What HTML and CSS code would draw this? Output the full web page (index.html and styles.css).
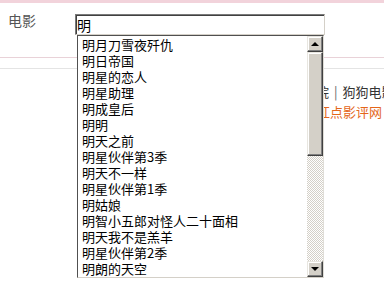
FILE: index.html
```html
<!DOCTYPE html>
<html lang="zh-CN">
<head>
  <meta charset="UTF-8" />
  <title>电影搜索</title>
  <link rel="stylesheet" href="styles.css">
</head>
<body>
  <div class="page">
    <div class="header">
      <div class="search-row">
        <span class="label">电影</span>
        <div class="box">
          <input class="query" type="text" value="明">
          <div class="suggest">
            <ul class="list">
              <li>明月刀雪夜歼仇</li>
              <li>明日帝国</li>
              <li>明星的恋人</li>
              <li>明星助理</li>
              <li>明成皇后</li>
              <li>明明</li>
              <li>明天之前</li>
              <li>明星伙伴第3季</li>
              <li>明天不一样</li>
              <li>明星伙伴第1季</li>
              <li>明姑娘</li>
              <li>明智小五郎对怪人二十面相</li>
              <li>明天我不是羔羊</li>
              <li>明星伙伴第2季</li>
              <li>明朗的天空</li>
            </ul>
            <div class="scrollbar">
              <div class="btn up"><span class="arrow"></span></div>
              <div class="thumb"></div>
              <div class="track"></div>
              <div class="btn down"><span class="arrow"></span></div>
            </div>
          </div>
        </div>
      </div>
    </div>
    <div class="subnav">
      <div class="links first">热门影院<span class="sep">|</span>狗狗电影</div>
      <div class="links second">红点影评网</div>
    </div>
  </div>
</body>
</html>
```

FILE: styles.css
```css
* {
  box-sizing: border-box;
  font-family: "Noto Sans CJK SC", "Liberation Sans", sans-serif;
}
body {
  margin: 0;
  background: #fff;
}
.page {
  height: 297px;
  overflow: hidden;
}
.header {
  border-top: 3px solid #f2d3db;
  border-bottom: 1px solid #e9d2d8;
  height: 58px;
}
.search-row {
  display: flex;
  padding: 10px 0 0 8px;
}
.label {
  width: 67px;
  font-size: 14px;
  line-height: 14px;
  color: #555;
}
.box {
  position: relative;
  z-index: 2;
  width: 250px;
  margin-top: 1px;
}
.query {
  display: block;
  width: 250px;
  height: 21px;
  margin: 0;
  padding: 0 0 0 1px;
  font-size: 14px;
  color: #000;
  border: 1px solid;
  border-color: #7a7a7a #d4d0c8 #d4d0c8 #7a7a7a;
  box-shadow: inset 1px 1px 0 #404040;
  outline: none;
}
.suggest {
  position: absolute;
  left: 2px;
  top: 21px;
  width: 247px;
  height: 243px;
  display: flex;
  background: #fff;
  border: 1px solid;
  border-color: #505050 #e0ded8 #d4d0c8 #505050;
}
.list {
  flex: 1;
  list-style: none;
  margin: 0;
  padding: 1px 0 0 4px;
  overflow: hidden;
}
.list li {
  font-size: 13px;
  line-height: 16px;
  height: 16px;
  color: #000;
  white-space: nowrap;
}
.scrollbar {
  width: 16px;
  display: flex;
  flex-direction: column;
}
.btn, .thumb {
  background: #d4d0c8;
  border: 1px solid;
  border-color: #e8e6e0 #404040 #404040 #e8e6e0;
  box-shadow: inset -1px -1px 0 #808080, inset 1px 1px 0 #fff;
}
.btn {
  height: 16px;
  display: flex;
  align-items: center;
  justify-content: center;
}
.thumb {
  height: 104px;
}
.track {
  flex: 1;
  background-color: #fff;
  background-image: repeating-conic-gradient(#d4d0c8 0 25%, #fff 0 50%);
  background-size: 2px 2px;
}
.arrow {
  width: 0;
  height: 0;
  border-left: 4px solid transparent;
  border-right: 4px solid transparent;
}
.up .arrow {
  border-bottom: 4px solid #000;
}
.down .arrow {
  border-top: 4px solid #000;
}
.subnav {
  margin-top: 10px;
  border-top: 1px solid #e4e4e4;
  padding-top: 13px;
}
.links {
  font-size: 13px;
  line-height: 20px;
  white-space: nowrap;
}
.first {
  padding-left: 277px;
  color: #333;
}
.sep {
  margin: 0 5px;
  color: #666;
}
.second {
  padding-left: 317px;
  color: #e4661a;
}
```
